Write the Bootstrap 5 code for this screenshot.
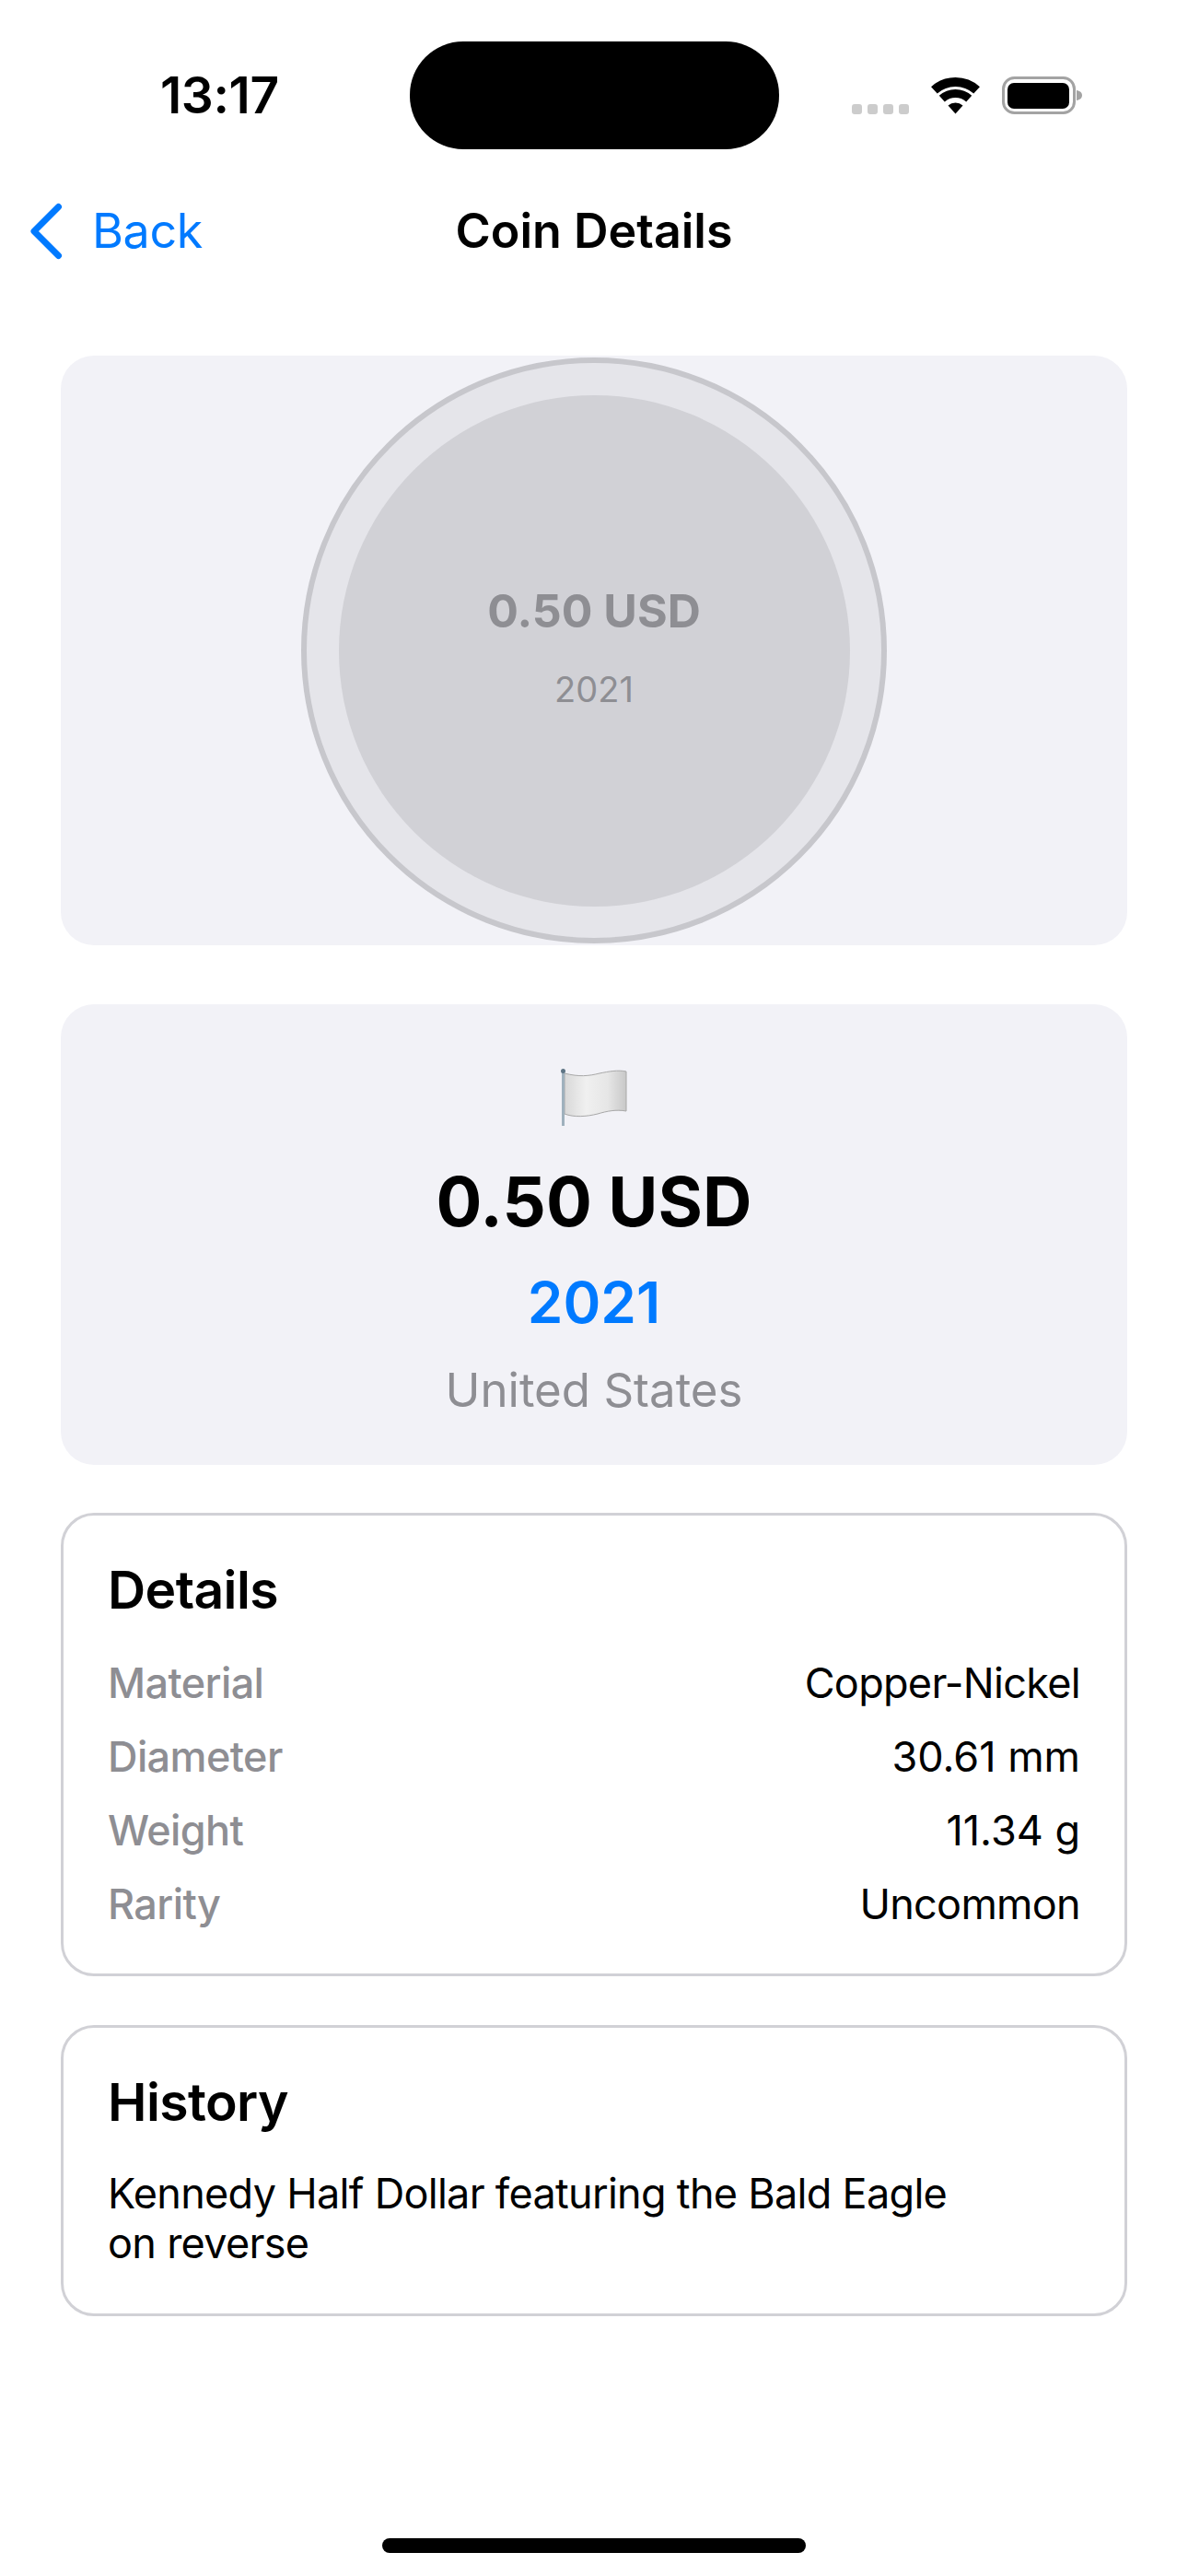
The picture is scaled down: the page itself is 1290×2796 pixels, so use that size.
<!DOCTYPE html>
<html lang="en">
<head>
  <meta charset="UTF-8" />
  <meta name="viewport" content="width=device-width, initial-scale=1" />
  <title>Coin Details</title>
  <link href="https://cdn.jsdelivr.net/npm/bootstrap@5.3.3/dist/css/bootstrap.min.css" rel="stylesheet" />
  <style>
    body { font-family: Inter, "Liberation Sans", sans-serif; color: #000; background: #fff; }
    .phone-page { height: 2796px; }

    .status-row { display: grid; grid-template-columns: 1fr 401px 1fr; align-items: center; padding-top: 45px; }
    .status-time { font-size: 55px; font-weight: 600; line-height: 1; padding-left: 174px; letter-spacing: -.4px; }
    .island { height: 117px; background: #000; border-radius: 58px; }
    .status-icons { padding-left: 79px; gap: 24px; height: 41px; }
    .signal-dots { gap: 6px; }
    .signal-dots span { width: 11px; height: 11px; border-radius: 3px; background: #ccc; }

    .nav-row { display: grid; grid-template-columns: 1fr auto 1fr; align-items: center; height: 90px; margin-top: 44px; }
    .back-link { color: #007aff; font-size: 52px; gap: 32px; text-decoration: none; line-height: 1; letter-spacing: -.4px; padding-left: 32px; }
    .nav-heading { font-size: 52px; font-weight: 600; margin: 0; line-height: 1; letter-spacing: 0; }

    .content-col { padding: 90px 66px 0; }
    .grey-panel { background: #f2f2f7; border-radius: 36px; }
    .coin-panel { height: 640px; }
    .coin-rim { width: 636px; height: 636px; border-radius: 50%; background: #e5e5ea; border: 6px solid #c7c7cc; }
    .coin-face { width: 555px; height: 555px; border-radius: 50%; background: #d1d1d6; color: #8e8e93; padding-bottom: 7px; }
    .coin-value { font-size: 50px; font-weight: 700; line-height: 1; }
    .coin-year { font-size: 38px; line-height: 1; margin-top: 41px; }

    .info-panel { height: 500px; margin-top: 64px; }
    .flag-mark { display: block; margin-top: 70px; }
    .info-value { font-size: 74px; font-weight: 700; line-height: 1; margin-top: 45px; letter-spacing: 0; }
    .info-year { font-size: 62px; font-weight: 600; line-height: 1; color: #007aff; margin-top: 42px; }
    .info-country { font-size: 51px; line-height: 1; color: #8e8e93; margin-top: 38px; }

    .line-card { border: 3px solid #d1d1d6; border-radius: 36px; padding: 0 48px; }
    .details-card { height: 503px; margin-top: 52px; padding-top: 52px; }
    .history-card { height: 316px; margin-top: 53px; padding-top: 52px; }
    .card-heading { font-size: 57px; font-weight: 600; line-height: 1; margin: 0; letter-spacing: -.6px; }
    .detail-rows { margin-top: 33px; }
    .detail-row { height: 80px; font-size: 45px; line-height: 80px; letter-spacing: -.7px; }
    .detail-label { color: #8e8e93; font-weight: 500; letter-spacing: -.6px; }
    .number-value { letter-spacing: 0; }
    .history-text { font-size: 45px; line-height: 54px; margin: 44px 0 0; letter-spacing: -.7px; }

    .home-bar { width: 460px; height: 16px; border-radius: 8px; background: #000; margin-bottom: 25px; }
  </style>
</head>
<body>
  <div class="phone-page d-flex flex-column">
    <div class="status-row">
      <div class="status-time">13:17</div>
      <div class="island"></div>
      <div class="status-icons d-flex align-items-end">
        <div class="signal-dots d-flex"><span></span><span></span><span></span><span></span></div>
        <svg width="53" height="40" viewBox="0 0 53 40">
          <g fill="none" stroke="#000">
            <path d="M3.4 13.9A34.5 34.5 0 0 1 49.6 13.9" stroke-width="10" />
            <path d="M11.8 23.2A22 22 0 0 1 41.2 23.2" stroke-width="9" />
          </g>
          <path d="M26.5 39.5L18.5 30.6A12 12 0 0 1 34.5 30.6Z" fill="#000" />
        </svg>
        <svg width="87" height="41" viewBox="0 0 87 41">
          <rect x="1.5" y="1.5" width="77" height="38" rx="12" fill="#fff" stroke="#a3a3a3" stroke-width="3" />
          <rect x="6" y="7" width="67" height="28" rx="7" fill="#000" />
          <path d="M81 15C84.500 15.500 87 17.500 87 20.500S84.500 25.500 81 26Z" fill="#a3a3a3" />
        </svg>
      </div>
    </div>

    <div class="nav-row">
      <a class="back-link d-flex align-items-center" href="#">
        <svg width="36" height="62" viewBox="0 0 36 62">
          <path d="M31.500 4.500L5 31L31.500 57.500" fill="none" stroke="#007aff" stroke-width="7" stroke-linecap="round" stroke-linejoin="round" />
        </svg>
        <span>Back</span>
      </a>
      <h1 class="nav-heading">Coin Details</h1>
      <div></div>
    </div>

    <div class="content-col">
      <div class="grey-panel coin-panel d-flex align-items-center justify-content-center">
        <div class="coin-rim d-flex align-items-center justify-content-center">
          <div class="coin-face d-flex flex-column align-items-center justify-content-center">
            <div class="coin-value">0.50 USD</div>
            <div class="coin-year">2021</div>
          </div>
        </div>
      </div>

      <div class="grey-panel info-panel d-flex flex-column align-items-center">
        <svg class="flag-mark" width="72" height="62" viewBox="0 0 72 62">
          <defs>
            <linearGradient id="flagFill" x1="0" y1="0" x2="1" y2="0">
              <stop offset="0" stop-color="#d8d8d8" />
              <stop offset=".35" stop-color="#f0f0f0" />
              <stop offset=".7" stop-color="#e6e6e6" />
              <stop offset="1" stop-color="#c8c8c8" />
            </linearGradient>
          </defs>
          <path d="M4 5C20 9 30 8 42 5C52 3 62 1 71 3V46C60 44 50 46 40 49C28 52 14 53 4 49Z" fill="url(#flagFill)" stroke="#a8a8a8" stroke-width="1" />
          <rect x="1" y="2" width="3" height="60" fill="#9fb1bd" />
          <circle cx="2.500" cy="2.500" r="2.500" fill="#5f7585" />
        </svg>
        <div class="info-value">0.50 USD</div>
        <div class="info-year">2021</div>
        <div class="info-country">United States</div>
      </div>

      <div class="card line-card details-card">
        <h2 class="card-heading">Details</h2>
        <div class="detail-rows">
          <div class="detail-row d-flex justify-content-between"><span class="detail-label">Material</span><span>Copper-Nickel</span></div>
          <div class="detail-row d-flex justify-content-between"><span class="detail-label">Diameter</span><span class="number-value">30.61 mm</span></div>
          <div class="detail-row d-flex justify-content-between"><span class="detail-label">Weight</span><span class="number-value">11.34 g</span></div>
          <div class="detail-row d-flex justify-content-between"><span class="detail-label">Rarity</span><span>Uncommon</span></div>
        </div>
      </div>

      <div class="card line-card history-card">
        <h2 class="card-heading">History</h2>
        <p class="history-text">Kennedy Half Dollar featuring the Bald Eagle<br />on reverse</p>
      </div>
    </div>

    <div class="home-bar mt-auto mx-auto"></div>
  </div>
  <script src="https://cdn.jsdelivr.net/npm/bootstrap@5.3.3/dist/js/bootstrap.bundle.min.js"></script>
</body>
</html>
